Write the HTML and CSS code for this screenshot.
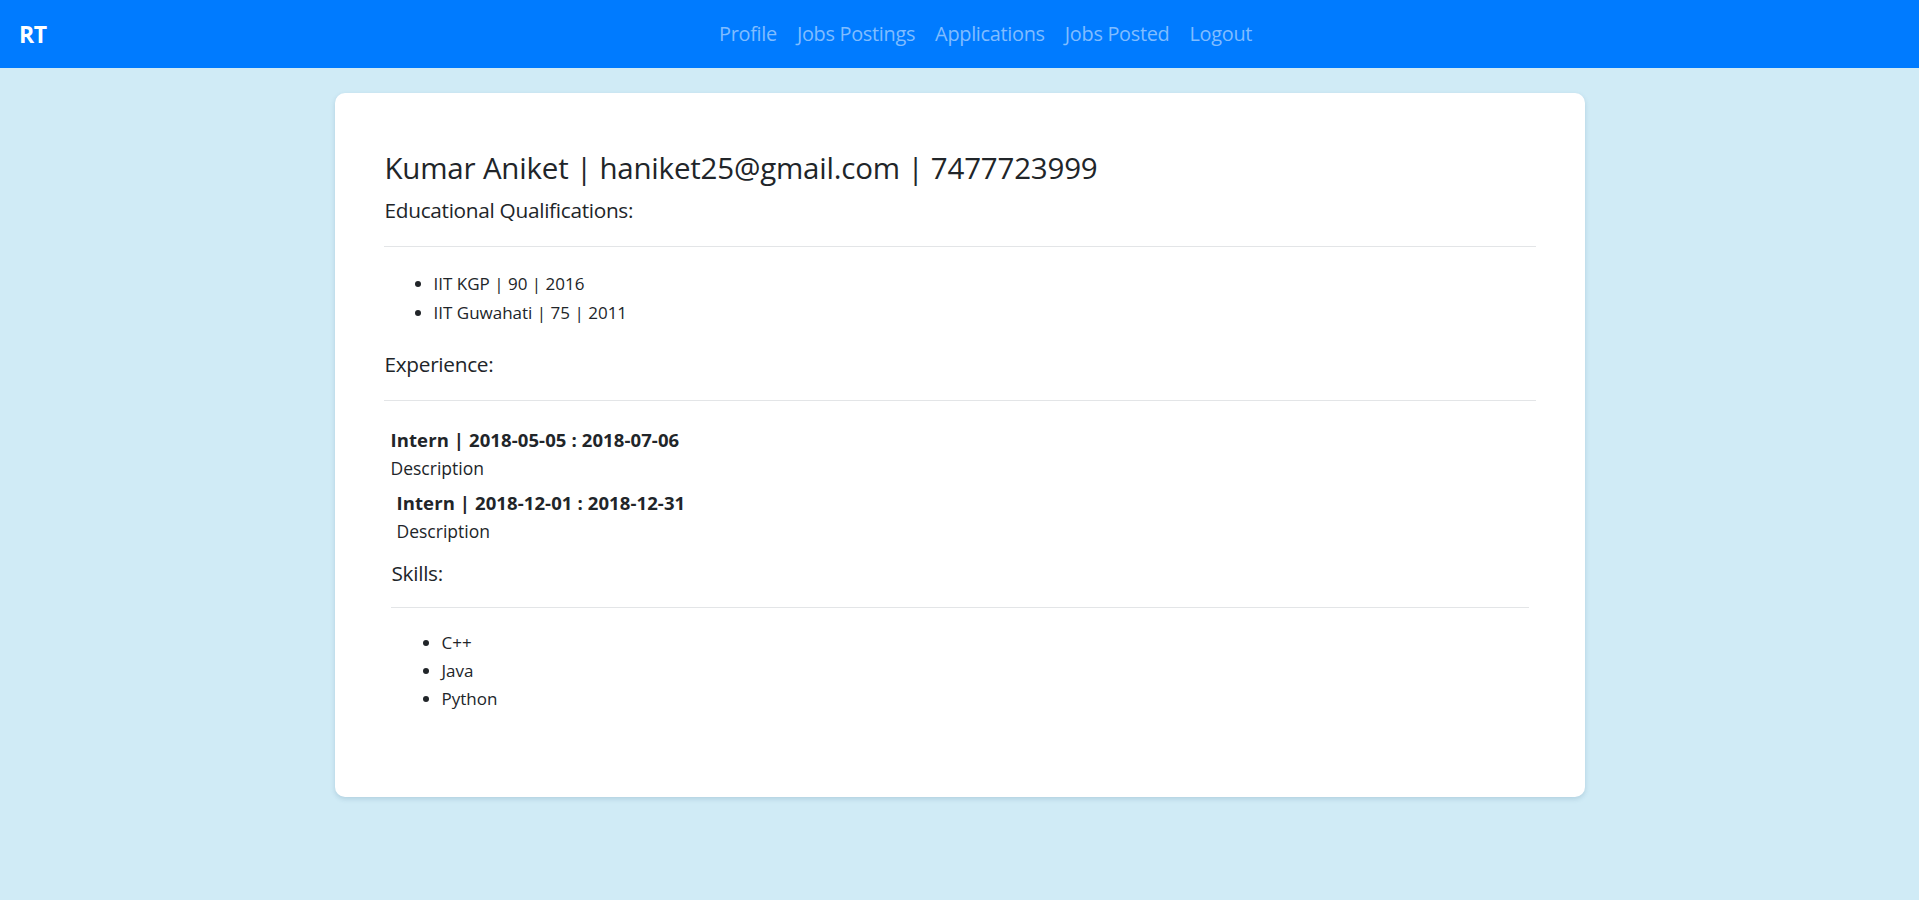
FILE: index.html
```html
<!DOCTYPE html>
<html lang="en">
<head>
<meta charset="utf-8">
<title>RT - Profile</title>
<link rel="stylesheet" href="styles.css">
</head>
<body>
  <nav class="navbar">
    <a class="brand" href="#">RT</a>
    <ul class="nav-links">
      <li><a href="#">Profile</a></li>
      <li><a href="#">Jobs Postings</a></li>
      <li><a href="#">Applications</a></li>
      <li><a href="#">Jobs Posted</a></li>
      <li><a href="#">Logout</a></li>
    </ul>
  </nav>
  <main class="page">
    <section class="card">
      <h3 class="name-line">Kumar Aniket | haniket25@gmail.com | 7477723999</h3>
      <h5 class="section-title edu-title">Educational Qualifications:</h5>
      <hr class="rule">
      <ul class="bullets edu-list">
        <li>IIT KGP | 90 | 2016</li>
        <li>IIT Guwahati | 75 | 2011</li>
      </ul>
      <h5 class="section-title exp-title">Experience:</h5>
      <hr class="rule">
      <div class="exp-block">
        <div class="job first-job">
          <div class="job-title">Intern | 2018-05-05 : 2018-07-06</div>
          <div class="job-desc">Description</div>
        </div>
        <div class="job nested-job">
          <div class="job-title">Intern | 2018-12-01 : 2018-12-31</div>
          <div class="job-desc">Description</div>
        </div>
        <h5 class="section-title skills-title">Skills:</h5>
        <hr class="rule skills-rule">
        <ul class="bullets skills-list">
          <li>C++</li>
          <li>Java</li>
          <li>Python</li>
        </ul>
      </div>
    </section>
  </main>
</body>
</html>
```
FILE: styles.css
```css
* {
  box-sizing: border-box;
}

html, body {
  margin: 0;
  padding: 0;
}

body {
  background: #d0ebf6;
  font-family: "Open Sans", "Noto Sans", "Liberation Sans", sans-serif;
  color: #212529;
  min-height: 900px;
}

.navbar {
  height: 68px;
  background: #007bff;
  display: flex;
  align-items: center;
  padding: 0 19px;
}

.brand {
  font-size: 23px;
  font-weight: 700;
  color: #ffffff;
  text-decoration: none;
  line-height: 30px;
  width: 690px;
  letter-spacing: -0.5px;
}

.nav-links {
  list-style: none;
  margin: 0;
  padding: 0;
  display: flex;
  gap: 0;
}

.nav-links li a {
  display: block;
  font-size: 19.9px;
  line-height: 30px;
  color: #80bdff;
  text-decoration: none;
  padding: 0 10px;
  letter-spacing: -0.3px;
}

.page {
  padding-top: 25px;
  display: flex;
  justify-content: center;
}

.card {
  width: 1250px;
  background: #ffffff;
  border-radius: 10px;
  box-shadow: 0 2px 5px rgba(40, 90, 120, 0.18);
  padding: 56px 49px 83px 49px;
}

.name-line {
  margin: 0;
  font-size: 29.5px;
  font-weight: 400;
  line-height: 37px;
  padding-left: 1px;
  letter-spacing: -0.2px;
}

.section-title {
  margin: 0;
  font-size: 20.8px;
  font-weight: 400;
  line-height: 29px;
  letter-spacing: -0.3px;
  padding-left: 1px;
}

.edu-title {
  margin-top: 10px;
}

.rule {
  margin: 21px 0 0 0;
  border: 0;
  border-top: 1px solid #e3e5e7;
  height: 0;
}

.bullets {
  margin: 0;
  padding-left: 50px;
  font-size: 17px;
  line-height: 29px;
}

.edu-list {
  margin-top: 22px;
}

.exp-title {
  margin-top: 23px;
}

.exp-block {
  padding: 0 7px 0 7px;
  margin-top: 24px;
}

.job-title {
  font-weight: 700;
  font-size: 18.5px;
  line-height: 29px;
  letter-spacing: 0.1px;
}

.job-desc {
  font-size: 17.5px;
  line-height: 29px;
}

.nested-job {
  margin-top: 5px;
  padding-left: 6px;
}

.skills-title {
  margin-top: 13px;
}

.skills-rule {
  margin-top: 19px;
}

.skills-list {
  margin-top: 21px;
  padding-left: 51px;
  line-height: 28.2px;
}
```
